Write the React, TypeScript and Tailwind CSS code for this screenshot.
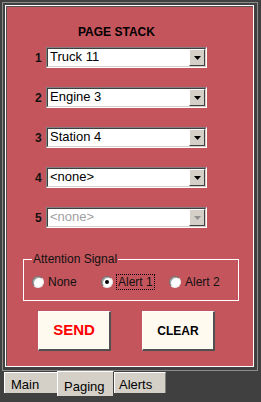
import React from "react";

function Combo({ text, disabled }: { text: string; disabled?: boolean }) {
  return (
    <div className="w-[161px] h-[21px] border border-t-[#808080] border-l-[#808080] border-b-white border-r-white">
      <div className="w-full h-full border border-t-[#404040] border-l-[#404040] border-b-[#d4d0c8] border-r-[#d4d0c8] bg-white flex">
        <div
          className={
            disabled
              ? "flex-1 pl-[2px] text-[13px] leading-[15px] text-[#a0a0a0] font-['Liberation_Sans_Narrow','Arial_Narrow','Liberation_Sans',sans-serif]"
              : "flex-1 pl-[2px] text-[13px] leading-[15px] text-black font-['Liberation_Sans_Narrow','Arial_Narrow','Liberation_Sans',sans-serif]"
          }
        >
          {text}
        </div>
        <div className="w-[16px] h-full bg-[#d4d0c8] border border-t-white border-l-white border-b-[#404040] border-r-[#404040] flex items-center justify-center">
          <svg width="7" height="4" viewBox="0 0 7 4">
            <polygon points="0,0 7,0 3.5,4" fill={disabled ? "#909090" : "#000"} />
          </svg>
        </div>
      </div>
    </div>
  );
}

function Radio({ checked }: { checked?: boolean }) {
  return (
    <span className="w-[12px] h-[12px] rounded-full bg-white border border-t-[#707070] border-l-[#707070] border-b-[#e8e8e8] border-r-[#e8e8e8] shadow-[inset_1px_1px_0_#a0a0a0] flex items-center justify-center">
      {checked ? <span className="w-[4px] h-[4px] rounded-full bg-black" /> : null}
    </span>
  );
}

const rows = [
  { n: "1", t: "Truck 11" },
  { n: "2", t: "Engine 3" },
  { n: "3", t: "Station 4" },
  { n: "4", t: "<none>" },
  { n: "5", t: "<none>", d: true },
];

export default function App() {
  return (
    <div className="w-[261px] h-[402px] bg-[#404040] overflow-hidden pt-[2px] font-['Liberation_Sans',Arial,sans-serif]">
      <div className="ml-[2px] w-[256px] h-[369px] border border-[#8c8c8c] pt-[2px] pl-[2px]">
        <div className="w-[249px] h-[362px] border border-white">
          <div className="w-full h-full border-t border-l border-t-[#555555] border-l-[#555555] bg-[#c4555c] pt-[18px]">
            <div className="pl-[71px] text-[12px] leading-[14px] font-bold text-black">PAGE STACK</div>
            <div className="mt-[8px] flex flex-col gap-[19px]">
              {rows.map((r) => (
                <div key={r.n} className="h-[21px] pl-[28px] flex items-center">
                  <span className="w-[11px] text-[12px] leading-[14px] font-bold text-[#111]">{r.n}</span>
                  <Combo text={r.t} disabled={r.d} />
                </div>
              ))}
            </div>
            <fieldset className="mt-[23px] ml-[16px] w-[216px] h-[50px] border border-white pl-[8px]">
              <legend className="px-[1px] text-[12px] leading-[16px] text-[#111]">Attention Signal</legend>
              <div className="mt-[8px] h-[14px] flex items-center text-[12px] leading-[14px] text-[#111]">
                <div className="w-[69px] flex items-center gap-[4px]">
                  <Radio />
                  <span>None</span>
                </div>
                <div className="w-[68px] flex items-center gap-[3px]">
                  <Radio checked />
                  <span className="border border-dotted border-black px-[1px] leading-[14px]">Alert 1</span>
                </div>
                <div className="flex items-center gap-[4px]">
                  <Radio />
                  <span>Alert 2</span>
                </div>
              </div>
            </fieldset>
            <div className="mt-[10px] pl-[31px] flex gap-[31px]">
              <div className="w-[73px] h-[40px] bg-[#fffaf0] border-t border-l border-t-white border-l-white border-b-2 border-r-2 border-b-[#505050] border-r-[#505050] flex items-center justify-center text-[15px] font-bold text-[#ff0000]">
                SEND
              </div>
              <div className="w-[73px] h-[40px] bg-[#fffaf0] border-t border-l border-t-white border-l-white border-b-2 border-r-2 border-b-[#505050] border-r-[#505050] flex items-center justify-center text-[12px] font-bold text-black">
                CLEAR
              </div>
            </div>
          </div>
        </div>
      </div>
      <div className="ml-[4px] flex items-start text-[13px] leading-[15px] text-black">
        <div className="mt-[1px] w-[53px] h-[21px] bg-[#d4d0c8] border-t border-l border-t-white border-l-white pl-[6px] pt-[4px]">Main</div>
        <div className="w-[57px] h-[25px] bg-[#d4d0c8] border-t border-l border-r border-t-white border-l-white border-r-[#404040] pl-[6px] pt-[7px]">Paging</div>
        <div className="mt-[1px] w-[52px] h-[21px] bg-[#d4d0c8] border-t border-l border-r border-t-white border-l-white border-r-[#808080] pl-[4px] pt-[4px]">Alerts</div>
      </div>
    </div>
  );
}
